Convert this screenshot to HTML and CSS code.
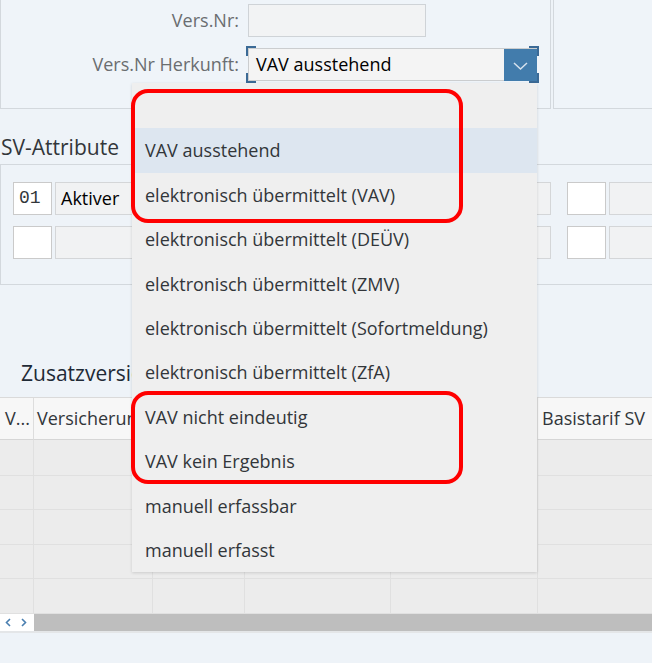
FILE: index.html
```html
<!DOCTYPE html>
<html lang="de">
<head>
<meta charset="utf-8">
<title>SV-Attribute</title>
<link rel="stylesheet" href="styles.css">
</head>
<body>
<div class="top">
  <div class="panel-left">
    <div class="label">Vers.Nr:</div>
    <div class="input input-vers"></div>
    <div class="label">Vers.Nr Herkunft:</div>
    <div class="select">
      <span class="select-text">VAV ausstehend</span>
      <span class="select-btn">
        <svg width="33" height="31" viewBox="0 0 33 31"><path d="M10 13 L16.5 19 L23 13" fill="none" stroke="#d6e2ee" stroke-width="1.5"/></svg>
      </span>
      <span class="corner tl"></span><span class="corner tr"></span><span class="corner bl"></span><span class="corner br"></span>
    </div>
  </div>
  <div class="panel-right"></div>
</div>

<h2 class="sec-title">SV-Attribute</h2>
<div class="sv-box">
  <div class="sv-row">
    <div class="cell-white mono">01</div>
    <div class="cell-grey">Aktiver</div>
    <div class="cell-white"></div>
    <div class="cell-grey last"></div>
  </div>
  <div class="sv-row">
    <div class="cell-white"></div>
    <div class="cell-grey"></div>
    <div class="cell-white"></div>
    <div class="cell-grey last"></div>
  </div>
</div>

<h2 class="sec-title2">Zusatzversicherungen</h2>
<div class="table">
  <div class="th">V...</div>
  <div class="th">Versicherungsart</div>
  <div class="th"></div>
  <div class="th"></div>
  <div class="th"></div>
  <div class="th">Basistarif SV</div>
  <div class="td"></div><div class="td"></div><div class="td"></div><div class="td"></div><div class="td"></div><div class="td"></div>
  <div class="td"></div><div class="td"></div><div class="td"></div><div class="td"></div><div class="td"></div><div class="td"></div>
  <div class="td"></div><div class="td"></div><div class="td"></div><div class="td"></div><div class="td"></div><div class="td"></div>
  <div class="td"></div><div class="td"></div><div class="td"></div><div class="td"></div><div class="td"></div><div class="td"></div>
  <div class="td"></div><div class="td"></div><div class="td"></div><div class="td"></div><div class="td"></div><div class="td"></div>
</div>
<div class="scrollbar">
  <div class="sb-arrows">
    <svg width="34" height="17" viewBox="0 0 34 17"><path d="M10 5 L6.5 8.5 L10 12" fill="none" stroke="#4a7fb0" stroke-width="1.6"/><path d="M22 5 L25.5 8.5 L22 12" fill="none" stroke="#4a7fb0" stroke-width="1.6"/></svg>
  </div>
  <div class="sb-track"></div>
</div>

<div class="dropdown">
  <div class="dd-item">&nbsp;</div>
  <div class="dd-item sel">VAV ausstehend</div>
  <div class="dd-item">elektronisch übermittelt (VAV)</div>
  <div class="dd-item">elektronisch übermittelt (DEÜV)</div>
  <div class="dd-item">elektronisch übermittelt (ZMV)</div>
  <div class="dd-item">elektronisch übermittelt (Sofortmeldung)</div>
  <div class="dd-item">elektronisch übermittelt (ZfA)</div>
  <div class="dd-item">VAV nicht eindeutig</div>
  <div class="dd-item">VAV kein Ergebnis</div>
  <div class="dd-item">manuell erfassbar</div>
  <div class="dd-item">manuell erfasst</div>
</div>
<div class="mark mark-1"></div>
<div class="mark mark-2"></div>
</body>
</html>
```

FILE: styles.css
```css
html, body {
  margin: 0;
  padding: 0;
}
body {
  width: 652px;
  height: 663px;
  overflow: hidden;
  position: relative;
  background: #eef3f8;
  font-family: "Open Sans", "Noto Sans", sans-serif;
  color: #32363a;
}

.top {
  display: flex;
  height: 109px;
}
.panel-left {
  width: 551px;
  height: 109px;
  box-sizing: border-box;
  border: 1px solid #d3d8dd;
  border-top: 0;
  display: grid;
  grid-template-columns: 238px auto;
  column-gap: 9px;
  row-gap: 11px;
  align-content: start;
  justify-items: start;
  padding-top: 4px;
  background: #eff4f9;
}
.panel-right {
  flex: 1;
  height: 109px;
  box-sizing: border-box;
  margin-left: 2px;
  border-left: 1px solid #d3d8dd;
  border-bottom: 1px solid #d3d8dd;
  background: #eff4f9;
}
.label {
  justify-self: end;
  font-size: 18px;
  line-height: 33px;
  color: #6a6d70;
}
.input {
  height: 33px;
  box-sizing: border-box;
  border: 1px solid #cfd3d7;
  background: #f2f3f4;
}
.input-vers {
  width: 178px;
}
.select {
  position: relative;
  display: flex;
  width: 289px;
  height: 33px;
  box-sizing: border-box;
  border: 1px solid #cbcdcf;
  background: #f4f4f4;
}
.select-text {
  flex: 1;
  padding-left: 7px;
  font-size: 18px;
  line-height: 31px;
  color: #000;
}
.select-btn {
  width: 33px;
  height: 32px;
  margin: 0 -1px 0 0;
  background: #427cac;
  display: flex;
  align-items: center;
  justify-content: center;
}
.corner {
  position: absolute;
  width: 8px;
  height: 8px;
  border: 0 solid #3b6a96;
}
.tl { left: -3px; top: -3px; border-left-width: 2px; border-top-width: 2px; }
.tr { right: -3px; top: -3px; border-right-width: 2px; border-top-width: 2px; }
.bl { left: -3px; bottom: -3px; border-left-width: 2px; border-bottom-width: 2px; }
.br { right: -3px; bottom: -3px; border-right-width: 2px; border-bottom-width: 2px; }

.sec-title {
  margin: 26px 0 5px;
  padding-left: 1px;
  font-size: 21px;
  line-height: 24px;
  font-weight: 400;
  color: #32363a;
}
.sv-box {
  width: 760px;
  height: 121px;
  box-sizing: border-box;
  border: 1px solid #d3d8dd;
  border-right: 0;
  padding: 17px 0 0 12px;
  display: flex;
  flex-direction: column;
  gap: 11px;
}
.sv-row {
  display: flex;
  height: 33px;
}
.cell-white {
  flex: 0 0 39px;
  box-sizing: border-box;
  border: 1px solid #cacaca;
  background: #fff;
  margin-right: 3px;
}
.cell-grey {
  flex: 0 0 496px;
  box-sizing: border-box;
  border: 1px solid #d4d6d8;
  background: #f1f2f3;
  margin-right: 16px;
  padding-left: 5px;
  font-size: 18px;
  line-height: 31px;
  color: #000;
}
.cell-grey.last {
  flex: 0 0 200px;
  margin-right: 0;
}
.mono {
  font-family: "Liberation Mono", "DejaVu Sans Mono", monospace;
  font-size: 18px;
  line-height: 31px;
  padding-left: 5px;
  color: #32363a;
}

.sec-title2 {
  margin: 76px 0 12px;
  padding-left: 21px;
  font-size: 21px;
  line-height: 24px;
  font-weight: 400;
  color: #1f2a36;
}

.table {
  display: grid;
  grid-template-columns: 34px 119px 92px 146px 147px 1fr;
  grid-template-rows: 42px 36px 34px 35px 34px 35px;
  border-top: 1px solid #dadada;
}
.th {
  background: #f7f7f7;
  border-right: 1px solid #dddddd;
  border-bottom: 1px solid #d6d6d6;
  box-sizing: border-box;
  font-size: 18px;
  line-height: 40px;
  color: #32363a;
  white-space: nowrap;
  overflow: hidden;
  padding-left: 3px;
}
.th:first-child {
  padding-left: 5px;
}
.th:nth-child(6) {
  padding-left: 4px;
  border-right: 0;
}
.td {
  background: #ececec;
  border-right: 1px solid #e0e0e0;
  border-bottom: 1px solid #e0e0e0;
  box-sizing: border-box;
}
.td:nth-child(6n) {
  border-right: 0;
}

.scrollbar {
  display: flex;
  height: 17px;
  border-bottom: 2px solid #e4e6e8;
}
.sb-arrows {
  width: 34px;
  background: #fff;
}
.sb-arrows svg {
  display: block;
}
.sb-track {
  flex: 1;
  background: #bebebe;
}

.dropdown {
  position: absolute;
  left: 132px;
  top: 83px;
  width: 405px;
  padding-top: 1px;
  background: #efefef;
  box-shadow: 0 1px 3px rgba(0, 0, 0, 0.14);
}
.dd-item {
  height: 44.4px;
  line-height: 44.4px;
  padding-left: 13px;
  font-size: 18px;
  color: #32363a;
  white-space: nowrap;
}
.dd-item.sel {
  background: #dde6f0;
}

.mark {
  position: absolute;
  left: 131px;
  width: 332px;
  box-sizing: border-box;
  border: 4px solid #ff0000;
  border-radius: 17px;
}
.mark-1 {
  top: 89px;
  height: 134px;
}
.mark-2 {
  top: 391px;
  height: 93px;
}
```
